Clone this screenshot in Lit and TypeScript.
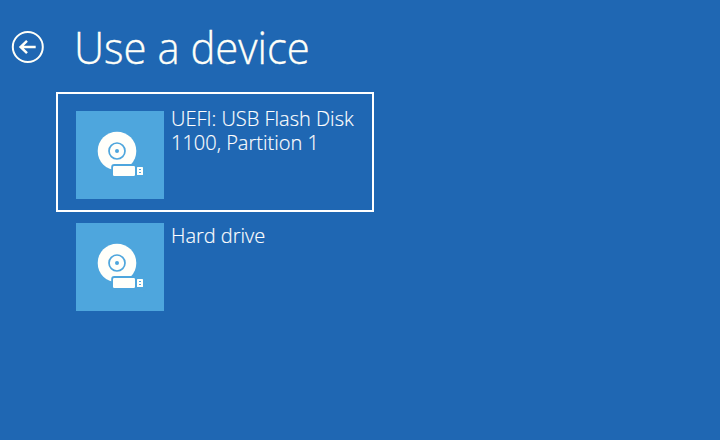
import { LitElement, html, css } from "lit";
import { customElement } from "lit/decorators.js";

@customElement("device-tile")
class DeviceTile extends LitElement {
  static properties = { label: {}, selected: { type: Boolean, reflect: true } };
  static styles = css`
    :host { display: flex; box-sizing: border-box; width: 318px; height: 120px; border: 2px solid transparent; padding: 17px 0 0 18px; color: #fff; }
    :host([selected]) { border-color: #fff; }
    .icon { flex: none; width: 88px; height: 88px; background: #4ea6dd; }
    .label { margin: var(--label-top, -4px) 0 0 7px; width: 195px; font-size: 20px; line-height: 24px; font-weight: 300; -webkit-text-stroke: 0.15px #fff; }
  `;
  render() {
    return html`<svg class="icon" viewBox="0 0 88 88">
      <circle cx="41" cy="40" r="19.3" fill="#fffffa"/>
      <circle cx="41" cy="40" r="8" fill="none" stroke="#4ea6dd" stroke-width="1.7"/>
      <circle cx="41" cy="40" r="2" fill="#4ea6dd"/>
      <rect x="35.2" y="53" width="35" height="14.5" rx="3" fill="#4ea6dd"/>
      <rect x="37" y="55" width="22" height="10" rx="1.2" fill="#fffffa"/>
      <rect x="61" y="56" width="6" height="8" rx="0.6" fill="#fffffa"/>
      <path d="M63 58h2v1h-2zM63 61h2v1h-2z" fill="#4ea6dd"/>
    </svg><div class="label">${(this as any).label}</div>`;
  }
}

@customElement("app-root")
class AppRoot extends LitElement {
  static styles = css`
    :host { display: block; box-sizing: border-box; width: 720px; height: 440px; overflow: hidden; background: #1f67b3; color: #fff; font-family: "Open Sans", "Noto Sans", sans-serif; }
    .header { display: flex; height: 92px; }
    .back { width: 34px; height: 34px; margin: 30px 0 0 11px; }
    .title { margin: 17px 0 0 28.5px; font-size: 44.5px; line-height: 60px; font-weight: 300; white-space: nowrap; color: #fffff8; -webkit-text-stroke: 0.35px #fffff8; transform: scaleX(0.94); transform-origin: 0 0; }
    .list { display: flex; flex-direction: column; margin-left: 56px; }
    .second { margin-top: -8px; --label-top: 1px; }
  `;
  render() {
    return html`<div class="header">
      <svg class="back" viewBox="0 0 34 34" fill="none" stroke="#fffff8">
        <circle cx="16.8" cy="17" r="15" stroke-width="2"/><path d="M24.7 17H10M16 10.8L9.6 17L16 23.2" stroke-width="2.5"/>
      </svg><div class="title">Use a device</div></div>
      <div class="list"><device-tile selected label="UEFI: USB Flash Disk 1100, Partition 1"></device-tile>
      <device-tile class="second" label="Hard drive"></device-tile></div>`;
  }
}
